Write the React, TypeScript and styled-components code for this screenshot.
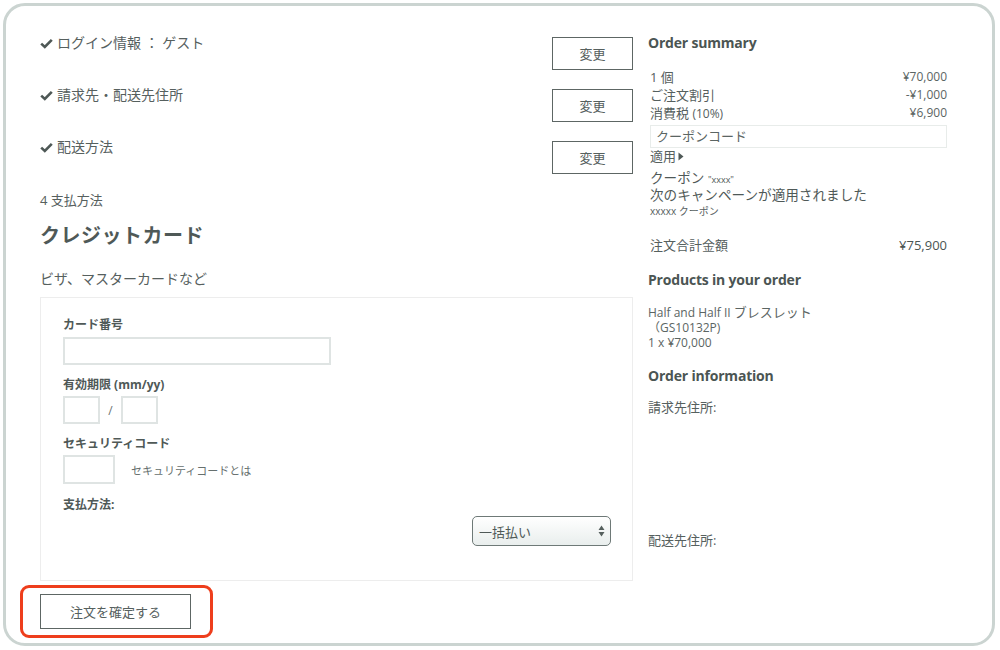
import React from "react";
import styled, { createGlobalStyle } from "styled-components";

const Global = createGlobalStyle`
  html, body { margin: 0; padding: 0; background: #fff; }
  body {
    font-family: "Open Sans", "Noto Sans CJK JP", sans-serif;
    color: #56605e;
  }
  * { box-sizing: border-box; }
`;

const Page = styled.div`
  width: 1000px;
  height: 650px;
  padding: 3px 5px 4px 3px;
`;

const Frame = styled.div`
  height: 643px;
  border: 3px solid #cbd4d1;
  border-radius: 22px;
  padding: 27px 45px 0 34px;
  display: grid;
  grid-template-columns: 593px 299px;
  column-gap: 15px;
  align-items: start;
`;

const LeftCol = styled.div`
  display: flex;
  flex-direction: column;
`;

const StepList = styled.div`
  display: flex;
  flex-direction: column;
  gap: 15px;
`;

const StepRow = styled.div`
  display: flex;
  justify-content: space-between;
  align-items: flex-start;
`;

const StepLabel = styled.div`
  display: flex;
  align-items: center;
  gap: 4px;
  font-size: 14px;
  line-height: 20px;
`;

const Check = () => (
  <svg width="13" height="11" viewBox="0 0 13 11">
    <path d="M1.2 5.6 L4.8 9 L11.8 1.8" fill="none" stroke="#4e5856" strokeWidth="2.6" />
  </svg>
);

const ChangeButton = styled.button`
  margin-top: 4px;
  width: 81px;
  height: 33px;
  border: 1px solid #5d6664;
  background: #fff;
  font-family: "Noto Sans CJK JP", sans-serif;
  font-size: 13px;
  color: #56605e;
  padding: 0;
`;

const StepNumber = styled.div`
  margin-top: 17px;
  font-size: 13px;
  line-height: 18px;
`;

const MethodTitle = styled.div`
  margin-top: 13px;
  font-size: 20px;
  line-height: 28px;
  font-weight: 700;
  letter-spacing: 0.5px;
  color: #4f5957;
`;

const MethodSub = styled.div`
  margin-top: 19px;
  font-size: 14px;
  line-height: 20px;
`;

const CardBox = styled.div`
  margin-top: 8px;
  height: 284px;
  border: 1px solid #ededed;
  padding: 19px 21px 0 22px;
  display: flex;
  flex-direction: column;
`;

const FieldLabel = styled.div<{ $gap?: number }>`
  margin-top: ${(p) => p.$gap ?? 0}px;
  font-size: 12px;
  line-height: 16px;
  font-weight: 700;
  color: #4f5957;
`;

const TextInput = styled.div<{ $w: number; $h?: number }>`
  width: ${(p) => p.$w}px;
  height: ${(p) => p.$h ?? 28}px;
  border: 2px solid #dfe4e3;
  background: #fff;
`;

const InputRow = styled.div<{ $gap?: number }>`
  margin-top: ${(p) => p.$gap ?? 3}px;
  display: flex;
  align-items: center;
`;

const Slash = styled.span`
  width: 21px;
  text-align: center;
  font-size: 12px;
  color: #6a7371;
`;

const HelpText = styled.span`
  margin-left: 16px;
  font-size: 11px;
  color: #66706e;
`;

const SelectRow = styled.div`
  margin-top: 3px;
  display: flex;
  justify-content: flex-end;
`;

const SelectBox = styled.div`
  width: 139px;
  height: 30px;
  border: 1px solid #6e7977;
  border-radius: 5px;
  background: linear-gradient(#ffffff, #e9eeed);
  box-shadow: inset 0 1px 0 #fff;
  display: flex;
  align-items: center;
  justify-content: space-between;
  padding: 0 5px 0 6px;
  font-size: 13px;
  color: #4f5957;
`;

const Arrows = () => (
  <svg width="7" height="12" viewBox="0 0 7 12">
    <path d="M3.5 0.5 L6.5 5 H0.5 Z M3.5 11.5 L6.5 7 H0.5 Z" fill="#56605e" />
  </svg>
);

const SubmitWrap = styled.div`
  position: relative;
  margin-top: 13px;
  align-self: flex-start;
`;

const Highlight = styled.div`
  position: absolute;
  left: -20px;
  top: -9px;
  width: 193px;
  height: 53px;
  border: 3px solid #ee3e1c;
  border-radius: 9px;
  pointer-events: none;
`;

const SubmitButton = styled.button`
  width: 151px;
  height: 35px;
  border: 1px solid #5d6664;
  background: #fff;
  font-family: "Noto Sans CJK JP", sans-serif;
  font-size: 13px;
  color: #56605e;
  padding: 0;
`;

const RightCol = styled.div`
  display: flex;
  flex-direction: column;
`;

const SideHeading = styled.div<{ $gap?: number }>`
  margin-top: ${(p) => p.$gap ?? 0}px;
  font-size: 14px;
  line-height: 20px;
  font-weight: 700;
  color: #4b5553;
  letter-spacing: -0.2px;
`;

const SumList = styled.div`
  margin-top: 15px;
  padding-left: 2px;
  display: flex;
  flex-direction: column;
`;

const SumRow = styled.div<{ $gap?: number }>`
  margin-top: ${(p) => p.$gap ?? 0}px;
  display: flex;
  justify-content: space-between;
  font-size: 13px;
  line-height: 18px;
`;

const Price = styled.span<{ $strong?: boolean }>`
  font-size: ${(p) => (p.$strong ? 13 : 12)}px;
  color: ${(p) => (p.$strong ? "#4b5553" : "#5b6563")};
`;

const Small = styled.span`
  font-size: 12px;
`;

const CouponInput = styled.div`
  margin-top: 2px;
  height: 23px;
  border: 1px solid #e8ecea;
  padding-left: 5px;
  font-size: 13px;
  line-height: 21px;
  color: #5b6563;
`;

const ApplyLink = styled.div`
  display: flex;
  align-items: center;
  gap: 2px;
  font-size: 13px;
  line-height: 18px;
  margin-top: -1px;
`;

const CouponNote = styled.div`
  margin-top: 4px;
  font-size: 13.6px;
  line-height: 17px;
  color: #4f5957;
`;

const Tiny = styled.span`
  font-size: 9px;
  line-height: 1;
`;

const CouponName = styled.div`
  margin-top: 1px;
  font-size: 10px;
  line-height: 14px;
`;

const ProductText = styled.div`
  margin-top: 15px;
  font-size: 12px;
  line-height: 15px;
  color: #5b6563;
`;

const Katakana = styled.span`
  font-size: 13px;
`;

const InfoLabel = styled.div<{ $gap: number }>`
  margin-top: ${(p) => p.$gap}px;
  font-size: 13px;
  line-height: 18px;
`;

const steps = ["ログイン情報 ： ゲスト", "請求先・配送先住所", "配送方法"];

export default function App() {
  return (
    <>
      <Global />
      <Page>
        <Frame>
          <LeftCol>
            <StepList>
              {steps.map((s) => (
                <StepRow key={s}>
                  <StepLabel>
                    <Check />
                    {s}
                  </StepLabel>
                  <ChangeButton>変更</ChangeButton>
                </StepRow>
              ))}
            </StepList>
            <StepNumber>4 支払方法</StepNumber>
            <MethodTitle>クレジットカード</MethodTitle>
            <MethodSub>ビザ、マスターカードなど</MethodSub>
            <CardBox>
              <FieldLabel>カード番号</FieldLabel>
              <InputRow $gap={4}>
                <TextInput $w={268} />
              </InputRow>
              <FieldLabel $gap={12}>有効期限 (mm/yy)</FieldLabel>
              <InputRow>
                <TextInput $w={37} />
                <Slash>/</Slash>
                <TextInput $w={37} />
              </InputRow>
              <FieldLabel $gap={12}>セキュリティコード</FieldLabel>
              <InputRow>
                <TextInput $w={52} $h={29} />
                <HelpText>セキュリティコードとは</HelpText>
              </InputRow>
              <FieldLabel $gap={13}>支払方法:</FieldLabel>
              <SelectRow>
                <SelectBox>
                  一括払い
                  <Arrows />
                </SelectBox>
              </SelectRow>
            </CardBox>
            <SubmitWrap>
              <SubmitButton>注文を確定する</SubmitButton>
              <Highlight />
            </SubmitWrap>
          </LeftCol>

          <RightCol>
            <SideHeading>Order summary</SideHeading>
            <SumList>
              <SumRow>
                <span>1 個</span>
                <Price>¥70,000</Price>
              </SumRow>
              <SumRow>
                <span>ご注文割引</span>
                <Price>-¥1,000</Price>
              </SumRow>
              <SumRow>
                <span>
                  消費税 <Small>(10%)</Small>
                </span>
                <Price>¥6,900</Price>
              </SumRow>
              <CouponInput>クーポンコード</CouponInput>
              <ApplyLink>
                適用
                <svg width="6" height="9" viewBox="0 0 6 9">
                  <path d="M0.5 0.5 L5.5 4.5 L0.5 8.5 Z" fill="#4f5957" />
                </svg>
              </ApplyLink>
              <CouponNote>
                クーポン <Tiny>"xxxx"</Tiny>
                <br />
                次のキャンペーンが適用されました
              </CouponNote>
              <CouponName>xxxxx クーポン</CouponName>
              <SumRow $gap={18}>
                <span>注文合計金額</span>
                <Price $strong>¥75,900</Price>
              </SumRow>
            </SumList>
            <SideHeading $gap={16}>Products in your order</SideHeading>
            <ProductText>
              Half and Half II <Katakana>ブレスレット</Katakana>
              <br />
              （GS10132P)
              <br />1 x ¥70,000
            </ProductText>
            <SideHeading $gap={16}>Order information</SideHeading>
            <InfoLabel $gap={12}>請求先住所:</InfoLabel>
            <InfoLabel $gap={115}>配送先住所:</InfoLabel>
          </RightCol>
        </Frame>
      </Page>
    </>
  );
}
